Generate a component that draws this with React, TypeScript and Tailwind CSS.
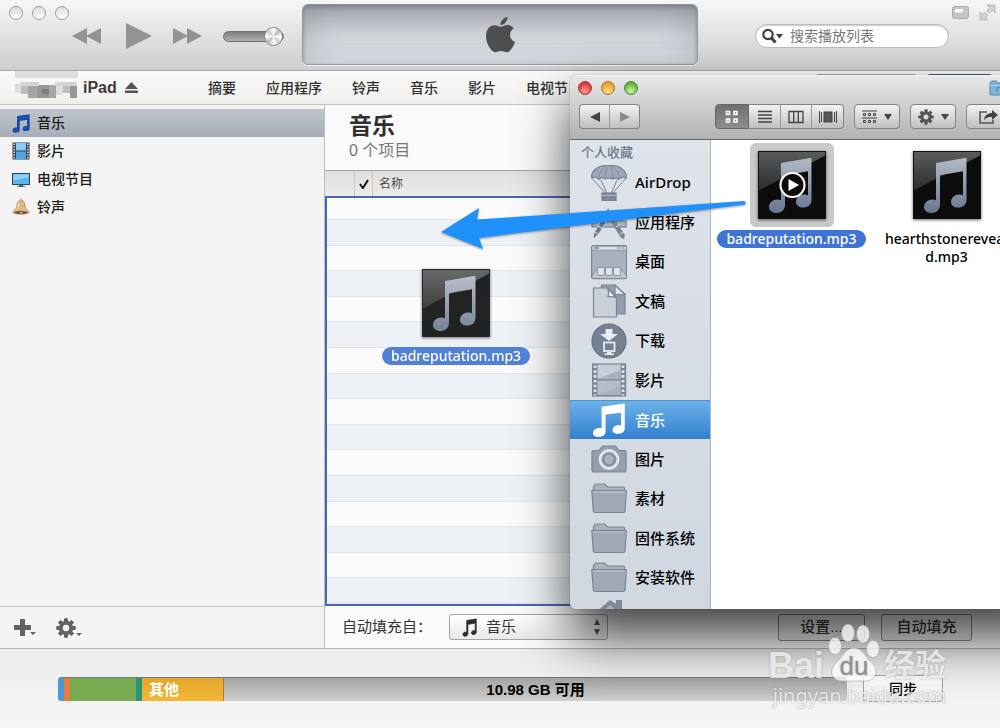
import { useState } from "react";
import type { ReactNode } from "react";

const tabs = ["摘要", "应用程序", "铃声", "音乐", "影片", "电视节目"];

const libraries = [
  { name: "音乐", icon: <BlueNote /> },
  { name: "影片", icon: <FilmStrip /> },
  { name: "电视节目", icon: <Television /> },
  { name: "铃声", icon: <Bell /> },
];

const places = [
  { name: "AirDrop", icon: <Parachute /> },
  { name: "应用程序", icon: <Applications /> },
  { name: "桌面", icon: <Desktop /> },
  { name: "文稿", icon: <Documents /> },
  { name: "下载", icon: <Downloads /> },
  { name: "影片", icon: <Movies /> },
  { name: "音乐", icon: <WhiteNote /> },
  { name: "图片", icon: <Camera /> },
  { name: "素材", icon: <Folder /> },
  { name: "固件系统", icon: <Folder /> },
  { name: "安装软件", icon: <Folder /> },
];

const notePath =
  "M23 12 53.5 6.7V49c0 5-4 7.500-8.500 7.500-4 0-7-2-7-5.500 0-4.500 4-7.500 8-7.500 1.500 0 3 .3 4 1V20.300L27 24.300V54c0 5-4 8-8.500 8-4.500 0-7.500-2.500-7.500-6 0-4.500 4-7.500 8.500-7.500 1.300 0 2.500.3 3.500.8z";

/* ---------- small icons ---------- */

function BlueNote() {
  return (
    <svg viewBox="8 4 48 60" className="h-[19px] w-[18px]" preserveAspectRatio="none">
      <path d={notePath} fill="#1d52b5" stroke="#1a469c" strokeWidth="3" />
    </svg>
  );
}

function FilmStrip() {
  return (
    <svg viewBox="0 0 18 18" className="size-[18px]">
      <rect x=".5" y=".5" width="17" height="17" fill="#39434d" />
      <rect x="4" y="1" width="10" height="7.500" fill="#8cc9f3" />
      <rect x="4" y="9.500" width="10" height="7.500" fill="#4da5e8" />
      <path d="M2.200 1.500v16M15.800 1.500v16" stroke="#e8eef3" strokeWidth="1.400" strokeDasharray="1.400 1.300" />
    </svg>
  );
}

function Television() {
  return (
    <svg viewBox="0 0 18 18" className="size-[18px]">
      <rect x=".5" y="3.500" width="17" height="11" fill="#5bb4ec" stroke="#30475c" />
      <path d="M1.500 4.500h15v3l-15 3z" fill="#8fd0f7" />
      <path d="M7 15h4v1.500H7zM5 16.200h8v.9H5z" fill="#555d66" />
    </svg>
  );
}

function Bell() {
  return (
    <svg viewBox="0 0 18 18" className="size-[18px]">
      <path d="M9 2.500c3 0 3.800 2 4 4.500.2 3 1 4 3.800 6.500.8.800.2 1.800-1 2-4 1-9.600 1-13.600 0-1.200-.2-1.800-1.200-1-2C4 11 4.800 10 5 7c.2-2.500 1-4.500 4-4.500z" fill="#dfb986" stroke="#a87c4b" strokeWidth=".7" />
      <ellipse cx="9" cy="14.500" rx="6.500" ry="1.500" fill="#6b4a2c" />
      <circle cx="9" cy="1.800" r="1.200" fill="#d8ae78" />
      <path d="M7 4.500c-.8 2-.5 4-2 6.500" stroke="#f6e3c6" strokeWidth="1.200" fill="none" />
      <path d="M8 14.800h2.500" stroke="#f0ddbc" strokeWidth="1.200" />
    </svg>
  );
}

function Gear({ className }: { className: string }) {
  return (
    <svg viewBox="-10 -10 20 20" className={className} fill="currentColor">
      {[0, 45, 90, 135].map((angle) => (
        <rect key={angle} x="-2" y="-9.700" width="4" height="19.400" rx=".6" transform={`rotate(${angle})`} mask="url(#gear-hole)" />
      ))}
      <circle r="5.300" fill="none" stroke="currentColor" strokeWidth="3.800" />
      <defs>
        <mask id="gear-hole" maskUnits="userSpaceOnUse" x="-10" y="-10" width="20" height="20">
          <rect x="-10" y="-10" width="20" height="20" fill="white" />
          <circle r="3.500" fill="black" />
        </mask>
      </defs>
    </svg>
  );
}

function DownArrow() {
  return (
    <svg viewBox="0 0 8 6" className="h-1.5 w-2" fill="#444">
      <path d="M0 0h8L4 6z" />
    </svg>
  );
}

/* ---------- Finder sidebar icons ---------- */

function PlaceIcon({ children }: { children: ReactNode }) {
  return (
    <svg viewBox="0 0 36 36" className="size-9 shrink-0" fill="#9ea8b6" stroke="#788494" strokeWidth="1.200">
      {children}
    </svg>
  );
}

function Parachute() {
  return (
    <PlaceIcon>
      <path d="M1 13 15 29M10 15l6 14M26 15l-6 14M35 13 21 29" fill="none" strokeWidth="1" />
      <path d="M0 13C1 4 9 0 18 0s17 4 18 13c-3-1.500-6-1-8 1.500-3-2-4.500-2-6-.5-2-1.300-6-1.300-8 0-1.500-1.500-4-1.500-6 .5-2-2.500-5-3-8-1.500z" />
      <path d="M8 14C8 7 12 2 18 0c6 2 10 7 10 14M14 14c0-6 1-11 4-14 3 3 4 8 4 14" fill="none" strokeWidth=".8" />
      <rect x="11" y="28" width="14" height="7.500" fill="#7d8999" />
      <path d="M11 30.500h14" stroke="#b0b9c5" />
    </PlaceIcon>
  );
}

function Applications() {
  return (
    <PlaceIcon>
      <rect x="1" y="17" width="34" height="6" fill="#a9b2bf" />
      <path d="M17 4 20 10 34 31l-1 4-3-1L15 10z" fill="#7b8796" stroke="none" />
      <path d="m19 8-5 2L3 29l-1 6 5-4L19 12z" fill="#6e7b8b" stroke="#dde2e9" strokeWidth=".7" />
      <path d="m7 22 4 2.500M25 23l4-2.500M4 28l3 2M29 30l4-2" stroke="#dde2e9" strokeWidth="1" />
    </PlaceIcon>
  );
}

function Desktop() {
  return (
    <PlaceIcon>
      <rect x=".6" y="1.600" width="35" height="33" rx="2" fill="#a8b1be" />
      <path d="M1 2.200h34.500v4H1z" fill="#dfe4ea" strokeWidth=".8" />
      <path d="M3 4h5M26 4h1.500M29 4h1.500M32 4h1.500" strokeWidth="1.600" />
      <path d="M5 26 1 32v2.400h34.500V32L31 26z" fill="#c1c8d2" strokeWidth=".8" />
      <g fill="#dfe4ea" strokeWidth=".8">
        <rect x="6.500" y="23.500" width="7" height="8" rx="1.500" />
        <rect x="14.500" y="23.500" width="7" height="8" rx="1.500" />
        <rect x="22.500" y="23.500" width="7" height="8" rx="1.500" />
      </g>
    </PlaceIcon>
  );
}

function Documents() {
  return (
    <PlaceIcon>
      <path d="M10.500 2H24l10 9.500V31H10.500z" fill="#929dac" />
      <path d="M24 2v9.500h10z" fill="#dfe4ea" />
      <path d="M2.500 5h14l9 10v19h-23z" fill="#c9d0d9" />
      <path d="M16.500 5c2 4 1 7 .5 9 3-.5 6-.5 8.500 1z" fill="#eef1f4" />
    </PlaceIcon>
  );
}

function Downloads() {
  return (
    <PlaceIcon>
      <circle cx="18" cy="18" r="17" fill="#748192" stroke="#66727f" />
      <path d="M14.500 6h7v5H27l-9 7-9-7h5.500z" fill="#e8ecf1" stroke="none" />
      <rect x="13" y="19.500" width="10.500" height="8.500" fill="#748192" stroke="#e8ecf1" strokeWidth="1.800" />
      <path d="M16 29h4.500v2H16zM13.500 30.500h9.500V32h-9.500z" fill="#e8ecf1" stroke="none" />
    </PlaceIcon>
  );
}

function Movies() {
  return (
    <PlaceIcon>
      <rect x="1.600" y="2" width="33" height="32" fill="#7b8796" />
      <rect x="6.500" y="2.600" width="23" height="14.500" fill="#c7ced8" stroke="none" />
      <rect x="6.500" y="18.500" width="23" height="14.500" fill="#b5bdc9" stroke="none" />
      <path d="m6.500 17 23-9v9zM6.500 33l23-9v9z" fill="#a9b2bf" stroke="none" />
      <path d="M4 3.500v30M32 3.500v30" stroke="#dfe4ea" strokeWidth="2.800" strokeDasharray="2.600 2.200" />
    </PlaceIcon>
  );
}

function WhiteNote() {
  return (
    <svg viewBox="9 5 47 58" className="size-9 shrink-0 p-px" fill="#fff" preserveAspectRatio="none">
      <path d={notePath} stroke="#fff" strokeWidth="1.500" />
    </svg>
  );
}

function Camera() {
  return (
    <PlaceIcon>
      <path d="M2.500 9.500H8L11.500 5h13L28 9.500h5.500Q35 9.500 35 11v18q0 2-2 2H3q-2 0-2-2V11q0-1.500 1.500-1.500z" fill="#949eac" />
      <circle cx="18" cy="18.500" r="9" fill="none" stroke="#e2e7ed" strokeWidth="2.800" />
      <circle cx="18" cy="18.500" r="5.500" fill="#a9b2bf" />
    </PlaceIcon>
  );
}

function Folder() {
  return (
    <PlaceIcon>
      <path d="M2.500 12V6.500L4.500 4h9l3 3H32q1.500 0 1.500 1.500V12z" fill="#a9b2be" />
      <path d="M.8 10.500h34.500L34 31q-.2 1.500-2 1.500H4.200Q2.500 32.500 2.300 31z" fill="#a0a9b7" />
      <path d="M2.200 12h31.800" stroke="#bec6d0" />
    </PlaceIcon>
  );
}

function House() {
  return (
    <PlaceIcon>
      <path d="M18 3 3 16v3h5v13h20V19h5v-3l-3-3V3h-6v4z" fill="#7d8999" stroke="none" />
      <path d="m18 8-11 9.500V32h22V17.500z" fill="#aab3c0" stroke="none" />
    </PlaceIcon>
  );
}

/* ---------- shared pieces ---------- */

function AudioArtwork({ playing = false }: { playing?: boolean }) {
  return (
    <svg viewBox="0 0 68 68" className="size-[68px] shadow-[0_1px_3px_rgba(0,0,0,0.6)]">
      <defs>
        <linearGradient id="note-fill" x2="0" y2="1">
          <stop stopColor="#b4bac5" />
          <stop offset="1" stopColor="#68778f" />
        </linearGradient>
        <linearGradient id="gloss" x2="0" y2="1">
          <stop stopColor="#5b5d5c" />
          <stop offset="1" stopColor="#2a2b2b" />
        </linearGradient>
      </defs>
      <rect width="68" height="68" fill="#0c0c0c" />
      <path d="M0 0h68v4L0 40z" fill="url(#gloss)" />
      <path d={notePath} fill="url(#note-fill)" />
      <rect x=".5" y=".5" width="67" height="67" fill="none" stroke="#111" />
      {playing && (
        <>
          <circle cx="34.500" cy="34" r="12" fill="#0b0b0b" stroke="#f5f5f5" strokeWidth="2.200" />
          <path d="M30.500 28v12l10.500-6z" fill="#fff" />
        </>
      )}
    </svg>
  );
}

function FileLabel({ children }: { children: ReactNode }) {
  return (
    <span className="h-[18px] rounded-full bg-[#3f74d4] px-[9px] text-sm/[17px] font-medium text-white">
      {children}
    </span>
  );
}

const toolButton =
  "flex h-[25px] items-center justify-center rounded border border-[#828282] bg-linear-to-b from-[#f3f3f3] to-[#bfbfbf] text-[#555]";

/* ---------- iTunes window ---------- */

function PlayerBar() {
  return (
    <header className="grid h-[71px] shrink-0 grid-cols-[302px_1fr_302px] border-b border-[#a8a6a6] bg-linear-to-b from-[#f6f6f6] to-[#cecece]">
      <div className="flex flex-col pt-1.5">
        <div className="flex gap-[9px] pl-[9px]">
          {["关闭", "最小化", "缩放"].map((label) => (
            <button key={label} aria-label={label} className="size-3.5 rounded-full border border-[#9d9d9d] bg-linear-to-b from-[#dcdcdc] to-white" />
          ))}
        </div>
        <div className="flex h-8 items-center gap-[21px] pl-[72px]">
          <button aria-label="上一首">
            <svg viewBox="0 0 30 16" className="h-4 w-[30px]" fill="#939393">
              <path d="M0 8 15 0v16zM14 8 29 0v16z" />
            </svg>
          </button>
          <button aria-label="播放">
            <svg viewBox="0 0 28 28" className="size-7" fill="#939393">
              <path d="M3 1v26l26-13z" />
            </svg>
          </button>
          <button aria-label="下一首">
            <svg viewBox="0 0 30 16" className="h-4 w-[30px]" fill="#939393">
              <path d="M1 0v16L16 8zM15 0v16l15-8z" />
            </svg>
          </button>
          <input
            type="range"
            aria-label="音量"
            defaultValue={100}
            className="w-[61px] appearance-none bg-transparent [&::-webkit-slider-runnable-track]:h-[11px] [&::-webkit-slider-runnable-track]:rounded-full [&::-webkit-slider-runnable-track]:border [&::-webkit-slider-runnable-track]:border-[#707070] [&::-webkit-slider-runnable-track]:bg-linear-to-b [&::-webkit-slider-runnable-track]:from-[#7d7d7d] [&::-webkit-slider-runnable-track]:to-[#b0b0b0] [&::-webkit-slider-thumb]:-mt-[5px] [&::-webkit-slider-thumb]:size-[19px] [&::-webkit-slider-thumb]:appearance-none [&::-webkit-slider-thumb]:rounded-full [&::-webkit-slider-thumb]:border [&::-webkit-slider-thumb]:border-[#858585] [&::-webkit-slider-thumb]:bg-[conic-gradient(#fff,#bbb,#fff,#ccc,#fff,#bbb,#fff,#ccc,#fff)]"
          />
        </div>
      </div>

      <div className="mt-1 flex h-[61px] items-center justify-center rounded-md border border-[#92949a] bg-linear-to-b from-[#a9acb5] via-[#ced1d6] to-[#e3e9ed] shadow-[inset_0_2px_4px_rgba(60,65,80,0.35),inset_14px_0_26px_rgba(90,95,105,0.16),inset_-14px_0_26px_rgba(90,95,105,0.16),0_1px_0_#f4f4f4]">
        <svg viewBox="0 0 29 36" className="h-9 w-[29px]" fill="#4e4e4e">
          <path d="M21.500 0c.3 3.700-3.300 8.300-7 8-.5-3.800 3.500-7.800 7-8z" />
          <path d="M14.800 9.800c2 0 3.600-1.700 6.700-1.700 2.500 0 4.700 1.200 6.200 3.300-5.500 3.300-4.700 11 1.300 13.500-.9 2.900-3.700 8-5.800 9.500-2.700 2-5-.3-8.200-.3-3.300 0-5.200 2.200-7.900.4C3.300 31.800 0 25 0 19.300 0 12.700 3.700 8.300 8.400 8.200c2.700 0 4.800 1.600 6.400 1.600z" />
        </svg>
      </div>

      <div className="flex flex-col pt-1">
        <div className="flex items-center justify-end gap-2.5 pr-1">
          <button aria-label="迷你播放程序">
            <svg viewBox="0 0 17 13" className="h-[13px] w-[17px]">
              <rect x=".5" y=".5" width="16" height="12" rx="2" fill="#c4c4c4" stroke="#ababab" />
              <rect x="3" y="3" width="8" height="3.500" fill="#f8f8f8" />
            </svg>
          </button>
          <button aria-label="全屏幕">
            <svg viewBox="0 0 17 17" className="size-[17px]" fill="#d2d2d2" stroke="#aaa" strokeWidth=".7">
              <path d="M8 1h8v8l-2.700-2.700-3 3-2.600-2.600 3-3zM9 16H1V8l2.200 2.300 2.300-2.300 3.500 3-2.500 2.500z" />
            </svg>
          </button>
        </div>
        <label className="mt-[3px] ml-[57px] flex h-6 w-[194px] items-center rounded-full border border-[#bdbdbd] bg-white pl-1.5 shadow-[inset_0_1px_1px_#ccc]">
          <svg viewBox="0 0 22 16" className="h-4 w-[22px] shrink-0">
            <circle cx="6" cy="6.500" r="4.700" fill="none" stroke="#3e3e3e" strokeWidth="2.200" />
            <path d="m9.500 10 4 4.500" stroke="#3e3e3e" strokeWidth="3" />
            <path d="M14 6h7l-3.500 4.500z" fill="#3e3e3e" />
          </svg>
          <input type="text" aria-label="搜索播放列表" placeholder="搜索播放列表" className="ml-1.5 w-32 text-sm text-[#333] outline-none placeholder:text-[#777]" />
        </label>
      </div>
    </header>
  );
}

function DeviceTabs() {
  return (
    <nav className="flex h-[34px] shrink-0 items-center border-b border-[#c5c5c5] bg-linear-to-b from-[#fbfaf9] to-[#efefee]">
      <div className="flex w-[208px] shrink-0 items-center pl-[15px]">
        {/* blurred owner name */}
        <svg viewBox="0 0 63 28" className="-mt-1.5 h-7 w-[63px]">
          <rect width="63" height="7" fill="#dededc" />
          <path d="M0 13h6v9H0zM41 15h7v9h-7z" fill="#dcdcdc" />
          <path d="M6 14h7v9H6zM48 14h7v8h-7z" fill="#bdbdbd" />
          <path d="M13 14h9v13h-9zM34 14h7v13h-7z" fill="#a5a5a5" />
          <path d="M22 14h12v13H22zM55 14h7v13h-7z" fill="#979797" />
          <path d="M6 11h18v4H6zM40 11h22v4H40z" fill="#d4d4d4" />
          <path d="M27 18h7v5h-7z" fill="#7f7f7f" />
        </svg>
        <span className="ml-[5px] text-base font-bold text-[#3c3c3c]">iPad</span>
        <button aria-label="推出" className="ml-2">
          <svg viewBox="0 0 13 11" className="h-[11px] w-[13px]" fill="#555">
            <path d="M6.500 0 13 7H0zM0 8.500h13V11H0z" />
          </svg>
        </button>
      </div>
      <div className="flex flex-1 gap-[30px]">
        {tabs.map((tab) => (
          <a key={tab} href="#" className="text-sm font-medium whitespace-nowrap text-[#303030]">
            {tab}
          </a>
        ))}
      </div>
      <div className="mr-[7px] flex gap-2">
        <button aria-label="添加到" className="h-7 w-[104px] rounded border border-[#aaa] bg-[#ddd]" />
        <button aria-label="完成" className="h-7 w-[67px] rounded border border-[#3c5878] bg-[#5c7da3]" />
      </div>
    </nav>
  );
}

function LibrarySidebar() {
  return (
    <aside className="flex w-[325px] shrink-0 flex-col border-r border-[#bcbcbc] bg-[#f4f4f4]">
      <ul className="flex-1 pt-1">
        {libraries.map((item, i) => (
          <li key={item.name}>
            <a
              href="#"
              className={
                i === 0
                  ? "flex h-7 items-center gap-[7px] bg-linear-to-b from-[#c0c5cd] to-[#a6adb8] pl-3 text-sm font-medium text-[#1c1c1c]"
                  : "flex h-7 items-center gap-[7px] pl-3 text-sm font-medium text-[#1c1c1c]"
              }
            >
              {item.icon}
              {item.name}
            </a>
          </li>
        ))}
      </ul>
      <div className="flex h-[42px] items-center gap-5 border-t border-[#c6c6c6] pl-3.5 text-[#636363]">
        <button aria-label="添加" className="flex items-end">
          <svg viewBox="0 0 22 17" className="h-[17px] w-[22px]" fill="currentColor">
            <path d="M6 0h5v6h6v5h-6v6H6v-6H0V6h6zM16 13h6l-3 3z" />
          </svg>
        </button>
        <button aria-label="操作" className="flex items-end">
          <Gear className="size-5" />
          <svg viewBox="0 0 6 5" className="h-[5px] w-1.5" fill="currentColor">
            <path d="M0 0h6L3 3z" />
          </svg>
        </button>
      </div>
    </aside>
  );
}

function MusicPane() {
  return (
    <main className="flex min-w-0 flex-1 flex-col bg-[#fafafa]">
      <div className="h-[65px] pt-1.5 pl-6">
        <h1 className="text-[23px]/[30px] font-bold text-[#303030]">音乐</h1>
        <p className="text-base/5 text-[#777]">0 个项目</p>
      </div>
      <div className="flex h-[26px] items-center border-t border-[#a5a5a5] bg-linear-to-b from-[#dedede] to-[#ececec] text-xs text-[#4a4a4a]">
        <span className="h-full w-[30px] border-r border-[#c9c9c9]" />
        <span className="flex h-full w-[18px] items-center justify-center border-r border-[#c9c9c9]">
          <svg viewBox="0 0 10 10" className="size-2.5">
            <path d="m1 5 3 4L9 1" fill="none" stroke="#111" strokeWidth="2" />
          </svg>
        </span>
        <span className="pl-1.5">名称</span>
      </div>
      <div className="flex flex-1 flex-col border-2 border-[#4a66b4]">
        <div className="h-[22px] border-b border-[#dfe4e8] bg-[#fbfbfb]" />
        {Array.from({ length: 15 }, (_, i) => (
          <div key={i} className={i % 2 ? "flex-1 border-b border-[#dfe4e8] bg-[#fbfbfb]" : "flex-1 border-b border-[#dfe4e8] bg-[#eef2f6]"} />
        ))}
      </div>
      <div className="flex h-[42px] items-center pr-7 pl-[17px] text-[15px] text-[#333]">
        <label htmlFor="autofill">自动填充自：</label>
        <div className="relative ml-[17px]">
          <select id="autofill" className="h-[26px] w-[159px] appearance-none rounded-[3px] border border-[#a3a3a3] bg-linear-to-b from-white to-[#e9e9e9] pl-9 text-[15px] text-[#333]">
            <option>音乐</option>
          </select>
          <svg viewBox="8 4 48 60" className="absolute top-1 left-[11px] size-[19px]" fill="#2b2b2b">
            <path d={notePath} stroke="#2b2b2b" strokeWidth="2" />
          </svg>
          <svg viewBox="0 0 6 16" className="absolute top-[5px] right-2 h-4 w-1.5" fill="#555">
            <path d="M0 6h6L3 0zM0 10h6l-3 6z" />
          </svg>
        </div>
        <button className="ml-auto h-[27px] w-[87px] rounded-[3px] border border-[#888] bg-linear-to-b from-white to-[#e9e9e9] font-medium">设置...</button>
        <button className="ml-4 h-[27px] w-[91px] rounded-[3px] border border-[#888] bg-linear-to-b from-white to-[#e9e9e9] font-medium">自动填充</button>
      </div>
    </main>
  );
}

function CapacityBar() {
  return (
    <footer className="flex h-20 shrink-0 items-center gap-4 border-t border-[#b5b5b5] bg-linear-to-b from-[#ececec] to-[#f6f6f6] pr-[57px] pl-[58px]">
      <div className="flex h-6 flex-1 overflow-hidden rounded-[3px] border-t border-[#777] text-[15px]/6 font-bold">
        <span className="w-1.5 bg-[#4f96d6]" />
        <span className="w-1.5 bg-[#e67e3a]" />
        <span className="w-[66px] bg-[#77ab51]" />
        <span className="w-1.5 bg-[#2b9478]" />
        <span className="w-[82px] border-r border-[#a5803a] bg-linear-to-b from-[#e4a62b] to-[#f3b737] pl-[7px] text-white">其他</span>
        <span className="flex-1 bg-linear-to-b from-[#a3a3a3] to-[#cfcfcf] text-center text-black">10.98 GB 可用</span>
      </div>
      <button className="h-[27px] w-20 rounded-[3px] border border-[#a5a5a5] bg-linear-to-b from-white to-[#ebebeb] text-sm font-medium text-black">同步</button>
    </footer>
  );
}

/* ---------- Finder window ---------- */

function FinderToolbar() {
  return (
    <div className="h-16 border-b border-[#686868] bg-linear-to-b from-[#e8e8e8] to-[#b2b2b2] pt-0.5">
      <div className="flex h-5 items-center gap-[9px] pl-2">
        <button aria-label="关闭" className="size-3.5 rounded-full border border-[#a33a36] bg-[radial-gradient(circle_at_50%_75%,#ffa49a,#e2403e_60%,#c22c2c)]" />
        <button aria-label="最小化" className="size-3.5 rounded-full border border-[#ab7626] bg-[radial-gradient(circle_at_50%_75%,#ffe597,#f0a93a_60%,#cf8620)]" />
        <button aria-label="缩放" className="size-3.5 rounded-full border border-[#4c8632] bg-[radial-gradient(circle_at_50%_75%,#d2f5a6,#6fbb4c_60%,#4b962f)]" />
        <svg viewBox="0 0 20 16" className="mr-[51px] ml-auto h-4 w-5 shrink-0">
          <path d="M1 15V3l1.500-2h5L9 3h10v12z" fill="#7eb4d6" stroke="#4f8db5" />
          <path d="M1.500 5.500h17" stroke="#a9d2ea" />
          <path d="M8 12V8l4-1v4" fill="none" stroke="#3c7ba5" />
        </svg>
      </div>
      <div className="flex items-center pt-1.5 pl-[9px]">
        <div className="flex">
          <button aria-label="后退" className={`${toolButton} w-[31px] rounded-r-none border-r-[#999]`}>
            <svg viewBox="0 0 10 10" className="size-2.5" fill="#444">
              <path d="M0 5 10 0v10z" />
            </svg>
          </button>
          <button aria-label="前进" className={`${toolButton} w-[30px] rounded-l-none border-l-0`}>
            <svg viewBox="0 0 10 10" className="size-2.5" fill="#8a8a8a">
              <path d="M10 5 0 0v10z" />
            </svg>
          </button>
        </div>
        <div className="ml-[75px] flex">
          <button aria-label="图标" className="flex h-[25px] w-[34px] items-center justify-center rounded-l border border-[#666] bg-linear-to-b from-[#6f6f6f] to-[#8e8e8e]">
            <svg viewBox="0 0 14 14" className="size-3.5" fill="none" stroke="#fff" strokeWidth="1.600">
              <path d="M1.500 1.500h3v3h-3zM9 1.500h3v3H9zM1.500 9h3v3h-3zM9 9h3v3H9z" />
            </svg>
          </button>
          <button aria-label="列表" className={`${toolButton} w-8 rounded-none border-r-[#999] border-l-0`}>
            <svg viewBox="0 0 14 14" className="size-3.5" stroke="#444" strokeWidth="1.300">
              <path d="M0 1.500h14M0 5h14M0 8.500h14M0 12h14" />
            </svg>
          </button>
          <button aria-label="分栏" className={`${toolButton} w-[31px] rounded-none border-r-[#999] border-l-0`}>
            <svg viewBox="0 0 16 14" className="h-3.5 w-4" fill="none" stroke="#444" strokeWidth="1.300">
              <path d="M1 1.500h14v11H1zM5.700 1.500v11M10.300 1.500v11" />
            </svg>
          </button>
          <button aria-label="Cover Flow" className={`${toolButton} w-8 rounded-l-none border-l-0`}>
            <svg viewBox="0 0 18 14" className="h-3.5 w-[18px]" stroke="#444">
              <path d="M.5 1v12M2.500 2v10M15.500 2v10M17.500 1v12" />
              <rect x="5" y="2" width="8" height="10" fill="#555" />
            </svg>
          </button>
        </div>
        <button aria-label="排列" className={`${toolButton} ml-2.5 w-[46px] gap-[7px]`}>
          <svg viewBox="0 0 15 14" className="h-3.5 w-[15px]" fill="none" stroke="#444">
            <path d="M0 1h15M0 8h15" />
            <path d="M1.500 3.500h2v2h-2zM6.500 3.500h2v2h-2zM11.500 3.500h2v2h-2zM1.500 10.500h2v2h-2zM6.500 10.500h2v2h-2zM11.500 10.500h2v2h-2z" />
          </svg>
          <DownArrow />
        </button>
        <button aria-label="操作" className={`${toolButton} ml-2.5 w-[46px] gap-[7px]`}>
          <Gear className="size-4" />
          <DownArrow />
        </button>
        <button aria-label="共享" className={`${toolButton} ml-2.5 w-[46px]`}>
          <svg viewBox="0 0 20 15" className="h-[15px] w-5" fill="none" stroke="#555" strokeWidth="1.600">
            <path d="M8 3H1v11h13v-3" />
            <path d="M5 11c.5-5 4-7 8-7V1l6 5-6 5V8c-3 0-6 .5-8 3z" fill="#444" stroke="none" />
          </svg>
        </button>
      </div>
    </div>
  );
}

function FinderWindow() {
  const [selected, setSelected] = useState(6);
  return (
    <section
      aria-label="Finder"
      className="absolute top-[75px] -right-[60px] bottom-[119px] left-[570px] flex flex-col overflow-hidden rounded-md border-t border-t-[#f6f6f6] bg-white font-['Noto_Sans','Noto_Sans_CJK_SC',sans-serif] shadow-[0_28px_52px_rgba(0,0,0,0.75),0_0_1px_rgba(0,0,0,0.6)]"
    >
      <FinderToolbar />
      <div className="flex min-h-0 flex-1">
        <aside className="flex w-[141px] shrink-0 flex-col overflow-hidden border-r border-[#b0b4ba] bg-linear-to-b from-[#dfe3ea] to-[#d0d7e1]">
          <h2 className="h-[23px] shrink-0 pt-1 pl-[11px] text-[13px]/4 font-medium text-[#6a7889]">个人收藏</h2>
          <ul className="flex h-[434px] shrink-0 flex-col">
            {places.map((place, i) => (
              <li key={place.name} className="flex-1">
                <button
                  onClick={() => setSelected(i)}
                  className={
                    i === selected
                      ? "flex h-full w-full items-center gap-2 border-t border-[#4694d3] bg-linear-to-b from-[#6cb2e8] to-[#317fd0] pl-[21px] text-[15px] font-medium text-white"
                      : "flex h-full w-full items-center gap-2 pl-[21px] text-[15px] font-medium text-black"
                  }
                >
                  {place.icon}
                  {place.name}
                </button>
              </li>
            ))}
          </ul>
          <div className="shrink-0 pl-[22px]">
            <House />
          </div>
        </aside>
        <div className="grid flex-1 grid-cols-[155px_155px] content-start pt-[3px] pl-[3px]">
          <div className="flex flex-col items-center gap-[3px]">
            <div className="rounded-md bg-[#c9c9c9] p-2">
              <AudioArtwork playing />
            </div>
            <FileLabel>badreputation.mp3</FileLabel>
          </div>
          <div className="flex flex-col items-center gap-[3px]">
            <div className="p-2">
              <AudioArtwork />
            </div>
            <p className="text-center text-sm/[18px] font-medium text-black">
              hearthstonereveal
              <br />
              d.mp3
            </p>
          </div>
        </div>
      </div>
    </section>
  );
}

function Watermark() {
  return (
    <div className="pointer-events-none absolute right-[54px] bottom-5 flex flex-col items-end text-white/75 [text-shadow:0_0_2px_rgba(90,90,90,0.5)]">
      <div className="flex h-[62px] items-end font-['Liberation_Sans','Noto_Sans_CJK_SC',sans-serif] font-bold">
        <span className="text-4xl/9">Bai</span>
        <div className="relative mx-1 h-[62px] w-[52px]">
          <svg viewBox="0 0 52 60" className="size-full" fill="rgba(255,255,255,0.75)" stroke="rgba(140,140,140,0.4)">
            <ellipse cx="7" cy="23" rx="6.500" ry="8.500" />
            <ellipse cx="20" cy="10" rx="6.500" ry="9" />
            <ellipse cx="35" cy="11" rx="6.500" ry="9" />
            <ellipse cx="45" cy="26" rx="6.500" ry="8.500" />
            <path d="M26 25c9 0 11 9 18 15 8 8 3 18-6 18H14c-10 0-14-10-6-18 7-6 9-15 18-15z" />
          </svg>
          <span className="absolute inset-x-0 bottom-1 text-center text-[26px]/7 font-normal text-[#8f8f8f]">du</span>
        </div>
        <span className="text-[31px]/9">经验</span>
      </div>
      <span className="font-['Noto_Sans',sans-serif] text-xl/6">jingyan.baidu.com</span>
    </div>
  );
}

export default function App() {
  return (
    <div className="relative flex h-screen min-h-[640px] flex-col overflow-hidden font-['Liberation_Sans','Noto_Sans_CJK_SC',sans-serif]">
      <PlayerBar />
      <DeviceTabs />
      <div className="flex min-h-0 flex-1">
        <LibrarySidebar />
        <MusicPane />
      </div>
      <CapacityBar />
      <FinderWindow />

      {/* file being dragged into the music list */}
      <div className="absolute top-[269px] left-[382px] flex flex-col items-center gap-2.5 font-['Noto_Sans',sans-serif] opacity-90">
        <AudioArtwork />
        <FileLabel>badreputation.mp3</FileLabel>
      </div>
      <svg viewBox="0 0 308 52" className="pointer-events-none absolute top-[200px] left-[440px] h-[52px] w-[308px] drop-shadow-[0_1px_1px_rgba(0,0,0,0.4)]">
        <path d="M1 32 39 8l-2 11.500L304 1q2.500 1 1 3.500L39 38l4 11z" fill="#2090fb" />
      </svg>
      <Watermark />
    </div>
  );
}
